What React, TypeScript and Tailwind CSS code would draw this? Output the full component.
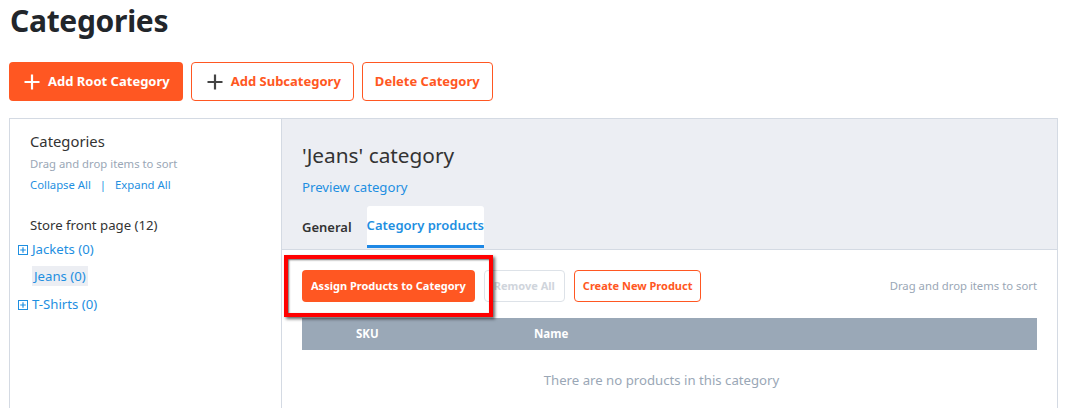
import React from "react";

const Plus = ({ color }: { color: string }) => (
  <svg width="16" height="16" viewBox="0 0 16 16" fill="none">
    <path d="M8 0.5V15.5M0.5 8H15.5" stroke={color} strokeWidth="2.2" />
  </svg>
);

const Boxed = () => (
  <svg width="10" height="10" viewBox="0 0 10 10" fill="none" className="shrink-0">
    <rect x="0.5" y="0.5" width="9" height="9" stroke="#1e8fe1" strokeWidth="1" />
    <path d="M5 2.2V7.8M2.2 5H7.8" stroke="#1e8fe1" strokeWidth="1.2" />
  </svg>
);

export default function App() {
  return (
    <div className="w-[1070px] h-[408px] overflow-hidden bg-white text-[#333] font-['Noto_Sans',sans-serif]">
      <div className="pl-[9px] pt-[1px]">
        <h1 className="text-[30px] font-bold leading-[40px] text-[#22262b] pl-[1px] tracking-[-0.3px]">Categories</h1>
        <div className="flex gap-2 mt-[21px] h-[39px]">
          <button className="flex items-center gap-2 pl-[15px] pr-[13px] rounded-[4px] bg-[#ff5722] text-white text-[13px] font-bold">
            <Plus color="#ffffff" />
            <span>Add Root Category</span>
          </button>
          <button className="flex items-center gap-2 pl-[15px] pr-[12px] rounded-[4px] border border-[#ff5722] bg-white text-[#ff5722] text-[13px] font-bold">
            <Plus color="#444" />
            <span>Add Subcategory</span>
          </button>
          <button className="flex items-center px-[12px] rounded-[4px] border border-[#ff5722] bg-white text-[#ff5722] text-[13px] font-bold">
            Delete Category
          </button>
        </div>
        <div className="flex mt-[17px] h-[300px]">
          {/* left panel */}
          <div className="w-[272px] shrink-0 border-l border-t border-[#d4dae3] pt-[11px]">
            <div className="pl-[20px]">
              <div className="text-[14.8px] leading-[22px] text-[#333]">Categories</div>
              <div className="text-[11.3px] leading-[22px] text-[#9aa7b6] mt-[1px]">Drag and drop items to sort</div>
              <div className="text-[11.3px] leading-[20px] text-[#1e8fe1] flex gap-[9px]">
                <span>Collapse All</span>
                <span>|</span>
                <span>Expand All</span>
              </div>
              <div className="text-[13.2px] leading-[24px] mt-[18px] text-[#333]">Store front page (12)</div>
            </div>
            <div className="pl-[8px] text-[13.2px] text-[#1e8fe1]">
              <div className="flex items-center gap-[4px] h-[24px] mt-[1px]">
                <Boxed />
                <span>Jackets (0)</span>
              </div>
              <div className="h-[28px] flex items-center pl-[14px]">
                <span className="bg-[#eceef3] px-[2px] leading-[20px]">Jeans (0)</span>
              </div>
              <div className="flex items-center gap-[4px] h-[28px] pt-[2px]">
                <Boxed />
                <span>T-Shirts (0)</span>
              </div>
            </div>
          </div>
          {/* right panel */}
          <div className="w-[777px] shrink-0 border border-b-0 border-[#d4dae3] flex flex-col">
            <div className="bg-[#eceef3] border-b border-[#d4dae3] pl-[20px] pt-[21px] h-[131px]">
              <div className="text-[20.8px] leading-[30px] text-[#333]">'Jeans' category</div>
              <div className="text-[13.2px] leading-[20px] text-[#1e8fe1] mt-[7px]">Preview category</div>
              <div className="flex mt-[9px] items-end text-[13px] font-semibold">
                <div className="h-[42px] flex items-center pr-[15px] pt-[2px] text-[#333]">General</div>
                <div className="h-[42px] flex items-center bg-white rounded-t-[3px] border-b-[3px] border-[#1e88e5] text-[#1e8fe1] pt-[1px]">
                  <span>Category products</span>
                </div>
              </div>
            </div>
            <div className="relative px-[20px] pt-[20px]">
              <div className="flex items-center gap-[9px] h-[32px]">
                <button className="h-[32px] px-[9px] rounded-[4px] bg-[#ff5722] text-white text-[11px] font-bold">
                  Assign Products to Category
                </button>
                <button className="h-[32px] px-[9px] rounded-[4px] border border-[#dde2e8] bg-white text-[#d0d5dc] text-[11px] font-bold">
                  Remove All
                </button>
                <button className="h-[32px] px-[8px] rounded-[4px] border border-[#ff5722] bg-white text-[#ff5722] text-[11px] font-bold">
                  Create New Product
                </button>
                <div className="ml-auto text-[11.3px] text-[#9aa7b6]">Drag and drop items to sort</div>
              </div>
              <div className="mt-[16px] h-[32px] bg-[#9aa8b7] flex items-center text-white text-[11.5px] font-bold">
                <div className="w-[232px] pl-[54px]">SKU</div>
                <div>Name</div>
              </div>
              <div className="text-center text-[13.2px] text-[#9aa7b6] leading-[20px] mt-[20px] pr-[16px]">
                There are no products in this category
              </div>
              <div className="absolute left-[2px] top-[5px] w-[209px] h-[62px] border-[4px] border-[#ff0000] shadow-[2px_2px_3px_rgba(0,0,0,0.6),inset_1px_1px_2px_rgba(0,0,0,0.6)]" />
            </div>
          </div>
        </div>
      </div>
    </div>
  );
}
